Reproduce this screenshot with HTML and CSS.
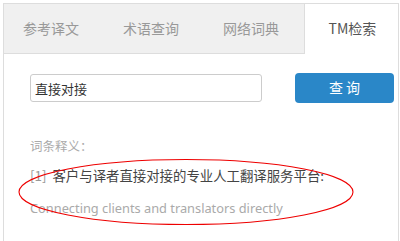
FILE: index.html
```html
<!DOCTYPE html>
<html>

<head>
    <meta charset="utf-8" />
    <title>TM检索</title>
    <link rel="stylesheet" href="styles.css">
</head>

<body>
    <div class="panel">
        <ul class="tabs">
            <li>参考译文</li>
            <li>术语查询</li>
            <li>网络词典</li>
            <li class="current">TM检索</li>
        </ul>
        <div class="content">
            <div class="search">
                <input class="keyword" type="text" value="直接对接" />
                <a href="#" class="btn">查 询</a>
            </div>
            <p class="label">词条释义：</p>
            <p class="entry"><span class="num">[1]</span> 客户与译者直接对接的专业人工翻译服务平台:</p>
            <p class="trans">Connecting clients and translators directly</p>
            <!--红圈标注-->
            <svg class="mark" width="340" height="70" viewBox="0 0 340 70">
                <ellipse cx="168" cy="34" rx="167" ry="32.5" fill="none" stroke="#e00" stroke-width="1.1" />
            </svg>
        </div>
    </div>
</body>

</html>
```
FILE: styles.css
```css
* {
    margin: 0;
    padding: 0;
    box-sizing: border-box;
}

body {
    font-family: "Noto Sans", "Noto Sans CJK SC", sans-serif;
    font-size: 14px;
    color: #444;
    background: #fff;
    padding: 3px 1px 0 3px;
}

li {
    list-style: none;
}

.panel {
    border: 1px solid #ddd;
    border-bottom: none;
    height: 240px;
}

.tabs {
    display: flex;
    height: 50px;
    background: #f0f0f0;
    border-bottom: 1px solid #ddd;
}

.tabs li {
    width: 100px;
    padding-left: 19px;
    line-height: 48px;
    color: #999;
    font-family: "Noto Sans CJK SC", sans-serif;
}

.tabs li.current {
    flex: 1;
    text-align: center;
    color: #555;
    background: #fff;
    border-left: 1px solid #ddd;
    height: 50px;
    padding-left: 2px;
}

.content {
    position: relative;
    padding: 19px 4px 0 26px;
}

.search {
    display: flex;
    align-items: center;
    justify-content: space-between;
}

.keyword {
    width: 232px;
    height: 28px;
    border: 1px solid #ccc;
    border-radius: 3px;
    padding-left: 4px;
    font-family: "Noto Sans CJK SC", sans-serif;
    font-size: 13px;
    color: #333;
    outline: none;
}

.btn {
    display: block;
    width: 99px;
    height: 30px;
    line-height: 29px;
    text-align: center;
    background: #2a87c8;
    border-radius: 4px;
    color: #fff;
    text-decoration: none;
    font-family: "Noto Sans CJK SC", sans-serif;
    font-size: 14px;
}

.label {
    margin-top: 34px;
    font-size: 12.5px;
    color: #aaa;
    line-height: 18px;
    font-family: "Noto Sans CJK SC", sans-serif;
}

.entry {
    margin-top: 10px;
    line-height: 20px;
    font-size: 13.4px;
    color: #444;
    font-family: "Noto Sans CJK SC", sans-serif;
}

.entry .num {
    color: #999;
    margin-right: 3px;
}

.trans {
    margin-top: 13px;
    line-height: 20px;
    font-size: 12.8px;
    color: #aaa;
}

.mark {
    position: absolute;
    left: 14px;
    top: 104px;
}
```
